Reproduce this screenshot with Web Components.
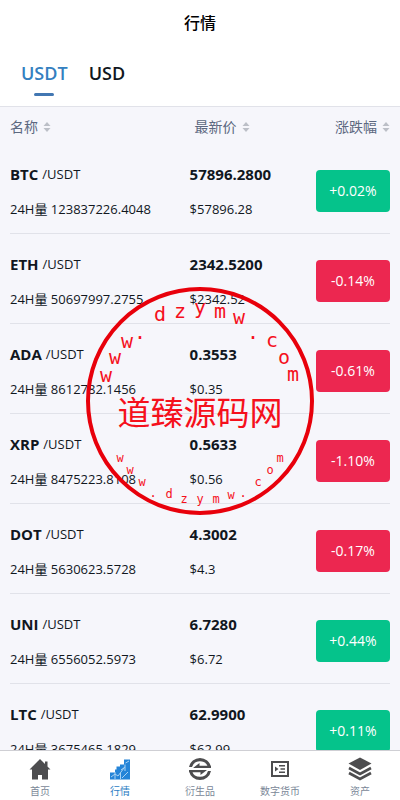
<!DOCTYPE html>
<html lang="zh-CN">
<head>
<meta charset="utf-8">
<meta name="viewport" content="width=device-width, initial-scale=1">
<title>行情</title>
<style>
    html, body {
        height: 100%;
        margin: 0;
    }

    body {
        font-family: 'Open Sans', 'Noto Sans CJK SC', sans-serif;
        color: #11171e;
        background: #f6f6fb;
    }
</style>
</head>
<body>
<market-page>
    <page-title slot="header">行情</page-title>
    <currency-tabs slot="header" items="USDT,USD" active="USDT"></currency-tabs>
    <market-table></market-table>
    <tab-bar slot="footer">
        <tab-item icon="home">首页</tab-item>
        <tab-item icon="chart" active>行情</tab-item>
        <tab-item icon="swap">衍生品</tab-item>
        <tab-item icon="list">数字货币</tab-item>
        <tab-item icon="layers">资产</tab-item>
    </tab-bar>
    <round-stamp slot="overlay"></round-stamp>
</market-page>

<script>
class MarketPage extends HTMLElement {
    constructor() {
        super();
        this.attachShadow({ mode: 'open' }).innerHTML = `
            <style>
                :host {
                    display: flex;
                    flex-direction: column;
                    height: 100%;
                    position: relative;
                    overflow: hidden;
                }

                header {
                    background: #fff;
                    border-bottom: 1px solid #e1e2e9;
                }

                main {
                    flex: 1;
                    min-height: 0;
                    overflow-y: auto;
                    scrollbar-width: none;
                }
            </style>
            <header><slot name="header"></slot></header>
            <main><slot></slot></main>
            <slot name="footer"></slot>
            <slot name="overlay"></slot>
        `;
    }
}

class PageTitle extends HTMLElement {
    constructor() {
        super();
        this.attachShadow({ mode: 'open' }).innerHTML = `
            <style>
                :host {
                    display: block;
                }

                h1 {
                    margin: 0;
                    color: #000;
                    font-size: 16px;
                    font-weight: 500;
                    line-height: 46px;
                    text-align: center;
                }
            </style>
            <h1><slot></slot></h1>
        `;
    }
}

class CurrencyTabs extends HTMLElement {
    constructor() {
        super();
        this.attachShadow({ mode: 'open' });
    }

    connectedCallback() {
        this.render();
    }

    render() {
        const items = this.getAttribute('items').split(',');
        const active = this.getAttribute('active');
        this.shadowRoot.innerHTML = `
            <style>
                :host {
                    display: flex;
                    gap: 21px;
                    padding: 14px 21px 10px;
                }

                button {
                    display: flex;
                    flex-direction: column;
                    align-items: center;
                    gap: 7px;
                    padding: 0;
                    border: 0;
                    background: none;
                    color: #11171e;
                    font: inherit;
                    font-size: 18px;
                    font-weight: 600;
                    line-height: 26px;
                    cursor: pointer;
                }

                button::after {
                    content: '';
                    width: 20px;
                    height: 3px;
                    border-radius: 2px;
                }

                button[aria-pressed="true"] {
                    color: #3480c0;
                }

                button[aria-pressed="true"]::after {
                    background: #4277b2;
                }
            </style>
            ${items.map(item => `
                <button type="button" data-item="${item}" aria-pressed="${item === active}">${item}</button>
            `).join('')}
        `;

        this.shadowRoot.querySelectorAll('button').forEach(button => {
            button.addEventListener('click', () => {
                this.setAttribute('active', button.dataset.item);
                this.render();
            });
        });
    }
}

class SortButton extends HTMLElement {
    constructor() {
        super();
        this.attachShadow({ mode: 'open' }).innerHTML = `
            <style>
                :host {
                    display: inline-block;
                    vertical-align: top;
                }

                button {
                    display: flex;
                    align-items: center;
                    gap: 5px;
                    padding: 0;
                    border: 0;
                    background: none;
                    color: #5c6880;
                    font: inherit;
                    font-size: 14px;
                    line-height: 20px;
                    cursor: pointer;
                }

                svg {
                    fill: #bcbfc7;
                }
            </style>
            <button type="button">
                <slot></slot>
                <svg width="8" height="10" viewBox="0 0 8 10"><path d="M4 0L7.5 4H.5zM4 10L.5 6h7z"/></svg>
            </button>
        `;
    }
}

class ChangeBadge extends HTMLElement {
    constructor() {
        super();
        this.attachShadow({ mode: 'open' }).innerHTML = `
            <style>
                :host {
                    display: inline-block;
                    box-sizing: border-box;
                    width: 74px;
                    border-radius: 4px;
                    background: #05c38b;
                    color: #fff;
                    font-size: 14px;
                    line-height: 42px;
                    text-align: center;
                    vertical-align: middle;
                }

                :host([down]) {
                    background: #ec2750;
                }
            </style>
            <slot></slot>
        `;
    }
}

class MarketTable extends HTMLElement {
    constructor() {
        super();
        this.attachShadow({ mode: 'open' });
        this.coins = [
            { name: 'BTC', volume: '123837226.4048', price: '57896.2800', usd: '57896.28', change: '+0.02%' },
            { name: 'ETH', volume: '50697997.2755', price: '2342.5200', usd: '2342.52', change: '-0.14%' },
            { name: 'ADA', volume: '8612782.1456', price: '0.3553', usd: '0.35', change: '-0.61%' },
            { name: 'XRP', volume: '8475223.8108', price: '0.5633', usd: '0.56', change: '-1.10%' },
            { name: 'DOT', volume: '5630623.5728', price: '4.3002', usd: '4.3', change: '-0.17%' },
            { name: 'UNI', volume: '6556052.5973', price: '6.7280', usd: '6.72', change: '+0.44%' },
            { name: 'LTC', volume: '3675465.1829', price: '62.9900', usd: '62.99', change: '+0.11%' }
        ];
    }

    connectedCallback() {
        this.render();
    }

    render() {
        this.shadowRoot.innerHTML = `
            <style>
                :host {
                    display: block;
                    padding: 0 10px;
                }

                table {
                    width: 100%;
                    table-layout: fixed;
                    border-spacing: 0;
                }

                th {
                    padding: 10px 0 7px;
                    font-weight: 400;
                    line-height: 20px;
                    text-align: left;
                }

                th:first-child {
                    width: 47%;
                }

                th:nth-child(2) {
                    padding-left: 6px;
                }

                th:last-child {
                    width: 27%;
                    text-align: right;
                }

                td {
                    padding: 20px 0 14px 1px;
                    border-bottom: 1px solid #e1e2e9;
                    font-size: 13px;
                    line-height: 20px;
                    white-space: nowrap;
                }

                td:first-child {
                    padding-left: 0;
                }

                td:last-child {
                    padding: 5px 0 0;
                    text-align: right;
                }

                .cell {
                    display: flex;
                    flex-direction: column;
                    gap: 15px;
                }

                .pair {
                    display: flex;
                    gap: 4px;
                }

                b {
                    font-size: 15px;
                    font-weight: 700;
                }
            </style>
            <table>
                <thead>
                    <tr>
                        <th><sort-button>名称</sort-button></th>
                        <th><sort-button>最新价</sort-button></th>
                        <th><sort-button>涨跌幅</sort-button></th>
                    </tr>
                </thead>
                <tbody>
                    ${this.coins.map(coin => `
                        <tr>
                            <td>
                                <div class="cell">
                                    <span class="pair"><b>${coin.name}</b> <span>/USDT</span></span>
                                    <span>24H量 ${coin.volume}</span>
                                </div>
                            </td>
                            <td>
                                <div class="cell">
                                    <b>${coin.price}</b>
                                    <span>$${coin.usd}</span>
                                </div>
                            </td>
                            <td><change-badge ${coin.change.startsWith('-') ? 'down' : ''}>${coin.change}</change-badge></td>
                        </tr>
                    `).join('')}
                </tbody>
            </table>
        `;
    }
}

class TabBar extends HTMLElement {
    constructor() {
        super();
        this.attachShadow({ mode: 'open' }).innerHTML = `
            <style>
                :host {
                    display: block;
                    background: #fff;
                    border-top: 1px solid #cfcfd4;
                }

                nav {
                    display: flex;
                }
            </style>
            <nav><slot></slot></nav>
        `;
    }
}

const icons = {
    home: `<path d="M12 2L1.500 12.500H4V22.500H10V18h4v4.500h6V12.500h2.500L19.500 9.500V4.500h-2.500V7z"/>`,
    chart: `
        <path d="M2 15.500h5V12.500h1.500V9.500H12V7.500h4V2.500h6V22.500H2z"/>
        <path d="M7 22V15M12.500 22v-6M17 14V7.500M3 20l4-3 3 2 6-8M13 13l4-3M17.500 6L21 4M14 21l6-6" fill="none" stroke="#a9d2f3"/>`,
    swap: `
        <path d="M1 10A11.200 11.200 0 0 1 23 10H20A8.400 8.400 0 0 0 4 10z"/>
        <path d="M1 14A11.200 11.200 0 0 0 23 14H20A8.400 8.400 0 0 1 4 14z"/>
        <path d="M5 11L11.500 6v2.800H23v2.200zM19 13l-6.500 5v-2.800H1V13z"/>`,
    list: `
        <path d="M4 5h16v14H4z" fill="none" stroke="currentColor" stroke-width="2"/>
        <path d="M11 8h6v1.500h-6zM12.500 11.200H17v1.500h-4.500zM11 14.500h6V16h-6zM7 9.500l3.500 2.500L7 14.500z"/>`,
    layers: `
        <path d="M12 .5L23.500 6.500 12 13 .5 6.500z"/>
        <path d="M1 11l11 6 11-6M1 16l11 6 11-6" fill="none" stroke="currentColor" stroke-width="2.600"/>`
};

class TabItem extends HTMLElement {
    constructor() {
        super();
        this.attachShadow({ mode: 'open' });
    }

    connectedCallback() {
        this.shadowRoot.innerHTML = `
            <style>
                :host {
                    display: block;
                    flex: 1;
                    color: #4d4d4f;
                    --label: #7a8797;
                }

                :host([active]) {
                    color: #2484d8;
                    --label: #2b7cc4;
                }

                a {
                    display: flex;
                    flex-direction: column;
                    align-items: center;
                    gap: 3px;
                    padding: 6px 0 2px;
                    color: inherit;
                    text-decoration: none;
                }

                svg {
                    fill: currentColor;
                }

                span {
                    color: var(--label);
                    font-size: 10px;
                    line-height: 14px;
                }
            </style>
            <a href="#${this.getAttribute('icon')}">
                <svg width="24" height="24" viewBox="0 0 24 24">${icons[this.getAttribute('icon')]}</svg>
                <span><slot></slot></span>
            </a>
        `;
    }
}

class RoundStamp extends HTMLElement {
    constructor() {
        super();
        this.attachShadow({ mode: 'open' }).innerHTML = `
            <style>
                :host {
                    position: absolute;
                    top: 285px;
                    left: 50%;
                    width: 232px;
                    margin-left: -116px;
                    pointer-events: none;
                }

                svg {
                    display: block;
                }

                text {
                    fill: #f5101c;
                    text-anchor: middle;
                    font-family: 'DejaVu Sans Mono', monospace;
                }

                .big {
                    font-size: 20px;
                }

                .small {
                    font-size: 12px;
                }

                .name {
                    font-family: 'Noto Sans CJK SC', sans-serif;
                    font-size: 33px;
                }
            </style>
            <svg width="232" height="232" viewBox="0 0 232 232">
                <circle cx="116" cy="116" r="112" fill="none" stroke="#e8000b" stroke-width="4"/>
                <text class="big"
                    x="22 31 43 56 76 96 116 136 155 169 188 200 209"
                    y="97 79 63 54 36 33 29 33 39 54 62 79 96">www.dzymw.com</text>
                <text class="name" x="116" y="140">道臻源码网</text>
                <text class="small"
                    x="36 46 58 69 85 100 116 132 147 159 174 186 196"
                    y="177 189 201 212 213 218 218 218 214 212 201 189 177">www.dzymw.com</text>
            </svg>
        `;
    }
}

customElements.define('market-page', MarketPage);
customElements.define('page-title', PageTitle);
customElements.define('currency-tabs', CurrencyTabs);
customElements.define('sort-button', SortButton);
customElements.define('change-badge', ChangeBadge);
customElements.define('market-table', MarketTable);
customElements.define('tab-bar', TabBar);
customElements.define('tab-item', TabItem);
customElements.define('round-stamp', RoundStamp);
</script>
</body>
</html>
